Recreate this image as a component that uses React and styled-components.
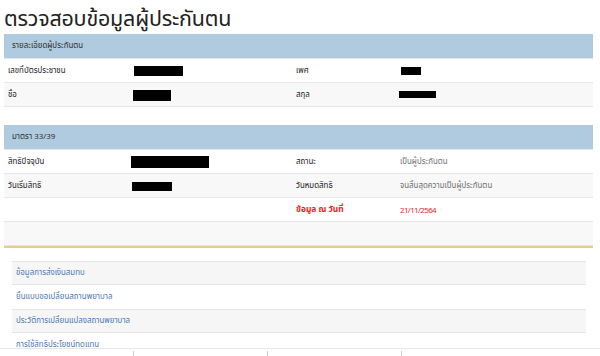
import React from 'react';
import styled, { createGlobalStyle } from 'styled-components';

const Global = createGlobalStyle`
  body {
    margin: 0;
    background: #fff;
    font-family: "Noto Sans", "Noto Sans Thai", "Liberation Sans", sans-serif;
    color: #333;
  }
`;

const Page = styled.div`
  padding: 0 7px 0 4px;
  height: 356px;
  overflow: hidden;
`;

const Title = styled.h1`
  margin: 0;
  padding: 5px 0 0 0;
  height: 29px;
  font-size: 21.5px;
  font-weight: 400;
  line-height: 26px;
  color: #222;
  letter-spacing: -0.2px;
`;

const Section = styled.div`
  margin-bottom: ${props => props.gap || 0}px;
`;

const Head = styled.div`
  background: #b0cbdf;
  height: 24px;
  padding: 0 8px;
  display: flex;
  align-items: center;
  font-size: 7.9px;
  color: #2e2e2e;
`;

const Row = styled.div`
  box-sizing: border-box;
  display: grid;
  grid-template-columns: 124px 164px 104px 1fr;
  height: 24px;
  align-items: center;
  background: ${props => props.shade ? '#f8f8f8' : '#fff'};
  border-top: 1px solid #e6e6e6;
  font-size: 7.9px;
  &:last-child {
    height: 25px;
    border-bottom: 1px solid #e6e6e6;
  }
`;

const Cell = styled.div`
  padding: 0 4px;
  color: ${props => props.red ? '#ea1c24' : props.label ? '#222' : '#6f6f6f'};
  font-weight: ${props => props.red && props.label ? 700 : 400};
  font-size: ${props => props.red && props.label ? '8.4px' : 'inherit'};
  letter-spacing: ${props => props.tight ? '-0.6px' : 'normal'};
  display: flex;
  align-items: center;
`;

const Redact = styled.span`
  display: inline-block;
  background: #000;
  width: ${props => props.w}px;
  height: ${props => props.h}px;
  margin-left: ${props => props.x || 0}px;
  margin-top: ${props => props.y || 0}px;
`;

const Gold = styled.div`
  height: 2px;
  background: #e6cd8a;
  margin-bottom: 13px;
`;

const Links = styled.div`
  margin: 0 7px 0 8px;
`;

const LinkItem = styled.div`
  box-sizing: border-box;
  height: 24px;
  display: flex;
  align-items: center;
  padding: 0 4px;
  font-size: 7.9px;
  color: #4a78b5;
  background: ${props => props.shade ? '#f6f6f6' : '#fff'};
  border-top: 1px solid ${props => props.shade ? '#e4e4e4' : 'transparent'};
  border-bottom: 1px solid ${props => props.shade ? '#e4e4e4' : 'transparent'};
`;

const Footer = styled.div`
  position: fixed;
  left: 0;
  right: 0;
  bottom: 0;
  height: 5px;
  background: #fff;
  border-top: 1px solid #e6e6e6;
  display: flex;
  padding-top: 2px;
`;

const FootCell = styled.div`
  width: 133px;
  border-right: 1px solid ${props => props.edge ? '#ccc' : 'transparent'};
`;

export default function App() {
  return (
    <>
      <Global />
      <Page>
        <Title>ตรวจสอบข้อมูลผู้ประกันตน</Title>
        <Section gap={18}>
          <Head>รายละเอียดผู้ประกันตน</Head>
          <Row>
            <Cell label>เลขที่บัตรประชาชน</Cell>
            <Cell><Redact w={49} h={10} x={2} /></Cell>
            <Cell label>เพศ</Cell>
            <Cell><Redact w={20} h={8} x={1} y={1} /></Cell>
          </Row>
          <Row shade>
            <Cell label>ชื่อ</Cell>
            <Cell><Redact w={38} h={11} x={1} y={1} /></Cell>
            <Cell label>สกุล</Cell>
            <Cell><Redact w={37} h={7} x={-1} /></Cell>
          </Row>
        </Section>
        <Section>
          <Head>มาตรา 33/39</Head>
          <Row>
            <Cell label>สิทธิปัจจุบัน</Cell>
            <Cell><Redact w={78} h={12} x={-1} /></Cell>
            <Cell label>สถานะ</Cell>
            <Cell>เป็นผู้ประกันตน</Cell>
          </Row>
          <Row shade>
            <Cell label>วันเริ่มสิทธิ</Cell>
            <Cell><Redact w={40} h={9} y={1} /></Cell>
            <Cell label>วันหมดสิทธิ</Cell>
            <Cell>จนสิ้นสุดความเป็นผู้ประกันตน</Cell>
          </Row>
          <Row>
            <Cell />
            <Cell />
            <Cell label red>ข้อมูล ณ วันที่</Cell>
            <Cell red tight>21/11/2564</Cell>
          </Row>
          <Row shade>
            <Cell />
          </Row>
        </Section>
        <Gold />
        <Links>
          <LinkItem shade>ข้อมูลการส่งเงินสมทบ</LinkItem>
          <LinkItem>ยื่นแบบขอเปลี่ยนสถานพยาบาล</LinkItem>
          <LinkItem shade>ประวัติการเปลี่ยนแปลงสถานพยาบาล</LinkItem>
          <LinkItem>การใช้สิทธิประโยชน์ทดแทน</LinkItem>
        </Links>
      </Page>
      <Footer>
        <FootCell edge />
        <FootCell edge />
        <FootCell edge />
        <FootCell />
      </Footer>
    </>
  );
}
